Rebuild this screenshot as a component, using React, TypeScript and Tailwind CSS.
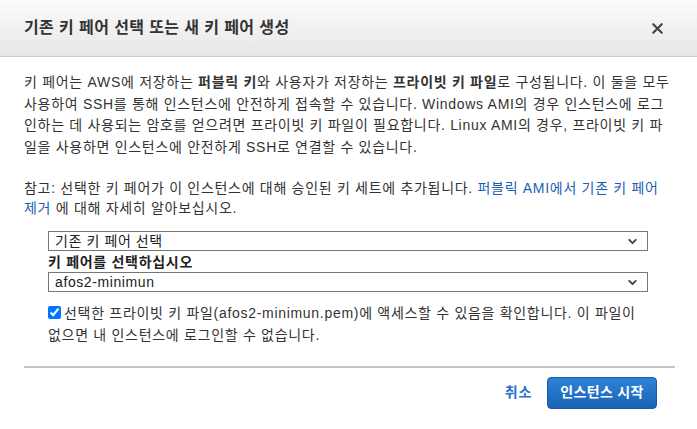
import { ChevronDown, X } from "lucide-react";

const font = {
  fontFamily: '"Liberation Sans", "Noto Sans CJK KR", sans-serif',
};

const SelectBox = ({ value }: { value: string }) => {
  return (
    <div className="flex h-[20px] w-[600px] items-center justify-between border border-[#767676] bg-white pl-[6px] pr-[8px] text-[14px] tracking-[0.6px] text-[#222]">
      <span className="leading-none">{value}</span>
      <ChevronDown className="h-[13px] w-[13px] text-[#444]" strokeWidth={3.5} />
    </div>
  );
};

const App = () => {
  return (
    <div className="h-[429px] w-[697px] overflow-hidden bg-white" style={font}>
      <div className="flex h-[57px] items-center justify-between border-b border-[#cfcfcf] bg-gradient-to-b from-[#fbfbfb] to-[#e7e7e7] pl-[24px] pr-[31px]">
        <h1 className="text-[16px] font-bold tracking-[0.4px] text-[#333]">
          기존 키 페어 선택 또는 새 키 페어 생성
        </h1>
        <X className="h-[17px] w-[17px] text-[#444]" strokeWidth={3} />
      </div>

      <div className="px-[24px] pt-[15px] text-[14px] leading-[21.5px] tracking-[0.7px] text-[#333]">
        <p>
          키 페어는 AWS에 저장하는 <b>퍼블릭 키</b>와 사용자가 저장하는{" "}
          <b>프라이빗 키 파일</b>로 구성됩니다. 이 둘을 모두 사용하여 SSH를 통해
          인스턴스에 안전하게 접속할 수 있습니다. Windows AMI의 경우 인스턴스에
          로그인하는 데 사용되는 암호를 얻으려면 프라이빗 키 파일이 필요합니다.
          Linux AMI의 경우, 프라이빗 키 파일을 사용하면 인스턴스에 안전하게 SSH로
          연결할 수 있습니다.
        </p>

        <p className="mt-[20px] leading-[20px]">
          참고: 선택한 키 페어가 이 인스턴스에 대해 승인된 키 세트에 추가됩니다.{" "}
          <span className="text-[#1a5fb4]">
            퍼블릭 AMI에서 기존 키 페어
            <br />
            제거
          </span>{" "}
          에 대해 자세히 알아보십시오.
        </p>

        <div className="mt-[13px] flex flex-col pl-[24px]">
          <SelectBox value="기존 키 페어 선택" />
          <label className="mt-[1px] text-[14px] font-bold leading-[20px] text-[#222]">
            키 페어를 선택하십시오
          </label>
          <SelectBox value="afos2-minimun" />
          <p className="mt-[10px] leading-[22px]">
            <input
              type="checkbox"
              defaultChecked
              className="mr-[3px] h-[13px] w-[13px] align-[-1px] accent-[#0075ff]"
            />
            선택한 프라이빗 키 파일(afos2-minimun.pem)에 액세스할 수 있음을
            확인합니다. 이 파일이
            <br />
            없으면 내 인스턴스에 로그인할 수 없습니다.
          </p>
        </div>

        <div className="mt-[20px] w-[651px] border-t-2 border-[#c4c4c4]" />

        <div className="flex items-center justify-end gap-[15px] pr-[16px] pt-[9px]">
          <span className="text-[14px] font-bold text-[#2a6fc9]">취소</span>
          <button className="h-[32px] w-[110px] rounded-[4px] border border-[#1b5aa5] bg-gradient-to-b from-[#2e83d6] to-[#1a63b6] text-[14px] font-bold tracking-[0.3px] text-white">
            인스턴스 시작
          </button>
        </div>
      </div>
    </div>
  );
};

export default App;
